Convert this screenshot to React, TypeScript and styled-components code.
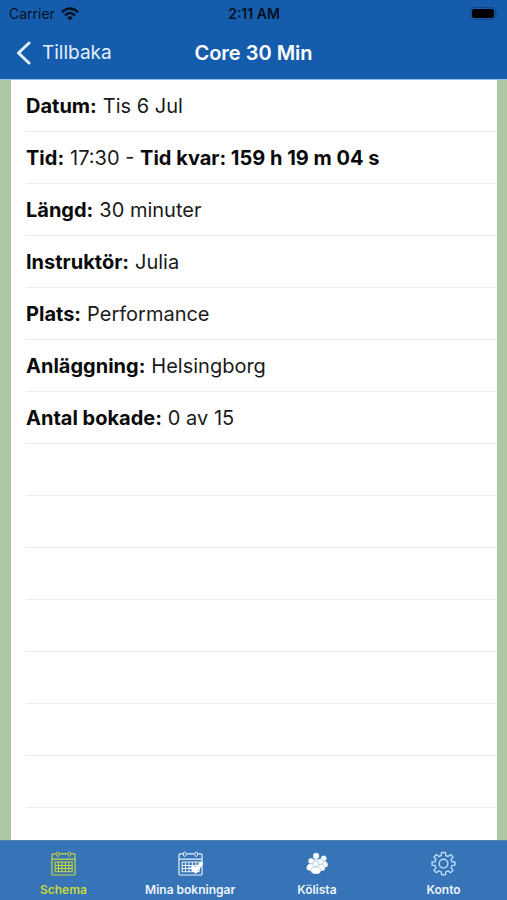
import React from 'react';
import styled, { createGlobalStyle } from 'styled-components';

const GlobalStyle = createGlobalStyle`
  *, *::before, *::after { box-sizing: border-box; }
  body {
    margin: 0;
    font-family: Inter, "Liberation Sans", sans-serif;
    color: #0a0a0a;
    background: #afc8a3;
  }
`;

const Screen = styled.div`
  display: flex;
  flex-direction: column;
  min-height: 100vh;
`;

const Header = styled.header`
  background: #155dac;
  border-bottom: 1px solid #8fc0e6;
`;

const StatusBar = styled.div`
  display: grid;
  grid-template-columns: 1fr auto 1fr;
  align-items: center;
  height: 27px;
  padding: 0 8px 0 9px;
  font-size: 14px;
  line-height: 16px;
  color: #06101f;
`;

const Carrier = styled.span`
  display: flex;
  align-items: center;
  gap: 6px;
`;

const Clock = styled.span`
  font-weight: 600;
`;

const Battery = styled.svg`
  justify-self: end;
`;

const TitleBar = styled.div`
  display: grid;
  grid-template-columns: 1fr auto 1fr;
  align-items: center;
  height: 52px;
  padding: 0 16px;
  color: #fff;
`;

const BackButton = styled.button`
  display: flex;
  align-items: center;
  justify-self: start;
  gap: 11px;
  padding: 0;
  border: 0;
  background: none;
  color: #e4effa;
  font: inherit;
  font-size: 19px;
  line-height: 24px;
  cursor: pointer;
`;

const Title = styled.h1`
  margin: 0;
  font-size: 20px;
  font-weight: 600;
  line-height: 24px;
`;

const Content = styled.main`
  flex: 1;
  margin: 0 10px 0 11px;
  background: #fff;
`;

const Details = styled.dl`
  margin: 0;
  padding-left: 15px;
`;

const Row = styled.div`
  display: flex;
  align-items: center;
  gap: 6px;
  height: 52px;
  border-bottom: 1px solid #ececed;
  font-size: 20px;
  line-height: 24px;
`;

const Label = styled.dt`
  font-weight: 700;
`;

const Value = styled.dd`
  margin: 0;
  color: #1a1a1a;
`;

const Countdown = styled.strong`
  font-weight: 700;
  color: #0a0a0a;
`;

const TabBar = styled.nav`
  display: grid;
  grid-template-columns: repeat(4, 1fr);
  height: 60px;
  border-top: 1px solid #547fae;
  background: #3673b7;
`;

const Tab = styled.a<{ $active?: boolean }>`
  display: flex;
  flex-direction: column;
  align-items: center;
  gap: 6px;
  padding-top: 10px;
  color: ${({ $active }) => ($active ? '#c9d83c' : '#edf4fc')};
  font-size: 12px;
  font-weight: 600;
  line-height: 16px;
  text-decoration: none;
`;

const TabIcon = styled.svg`
  display: block;
  width: 25px;
  height: 25px;
`;

const CalendarShape = () => (
  <g fill="none" stroke="currentColor">
    <path strokeWidth="1.200" d="M5 3H2.200A1.200 1.200 0 0 0 1 4.200V23.800A1.200 1.200 0 0 0 2.200 25H23.800A1.200 1.200 0 0 0 25 23.800V4.200A1.200 1.200 0 0 0 23.800 3H21M9 3H17M1 8.500H25" />
    <ellipse cx="7" cy="3.300" rx="1.500" ry="2.300" />
    <ellipse cx="19" cy="3.300" rx="1.500" ry="2.300" />
    <path strokeWidth="1.100" d="M4.300 11.500H22V21.500H4.300ZM4.300 15H22M4.300 18.200H22M7.800 11.500V21.500M11.400 11.500V21.500M15 11.500V21.500M18.600 11.500V21.500" />
  </g>
);

const ScheduleIcon = () => (
  <TabIcon viewBox="0 0 26 26" aria-hidden="true"><CalendarShape /></TabIcon>
);

const BookingsIcon = () => (
  <TabIcon viewBox="0 0 26 26" aria-hidden="true">
    <CalendarShape />
    <path d="M13 18L15.700 15.500L18.400 18L24 11.500L25.500 13.200L18.700 22.800Z" fill="#fff" stroke="#fff" strokeWidth="1.400" strokeLinejoin="round" />
  </TabIcon>
);

const QueueIcon = () => (
  <TabIcon viewBox="0 0 26 26" aria-hidden="true">
    <g fill="#fff" stroke="#3673b7" strokeWidth="0.300">
      <circle cx="12.600" cy="5.200" r="3.300" />
      <path d="M8.500 15V11.500C8.500 9.300 10.200 8.300 12.600 8.300S16.700 9.300 16.700 11.500V15Z" />
      <circle cx="20.500" cy="7.700" r="3" />
      <path d="M16.800 17V13.500C16.800 11.500 18.300 10.500 20.500 10.500S25 12 25 14.500C25 16.500 22.500 17.500 19.500 17.500Z" />
      <circle cx="7.400" cy="10.400" r="3" />
      <path d="M2.500 18C2.500 15 4.500 13.100 7.500 13.100S11.700 15 11.700 18V20.500C7.500 21.500 2.500 20.500 2.500 18Z" />
      <circle cx="17" cy="11" r="3" />
      <path d="M13.500 18C13.500 15.300 14.500 13.800 17 13.800S22 15.500 22 18.500C22 20.500 18 21.500 15 20.500Z" />
      <circle cx="12.300" cy="13.700" r="3.200" />
      <path d="M7 20.200C7 18 9 16.600 12.300 16.600S17.600 18 17.600 20.500C17.600 22.800 15 24 12.300 24S7 22.600 7 20.200Z" />
    </g>
  </TabIcon>
);

const AccountIcon = () => (
  <TabIcon viewBox="0 0 26 26" fill="none" stroke="#b8d8f4" strokeWidth="1.500" strokeLinejoin="round" aria-hidden="true">
    <path d="M11 1.500H15L15.400 4.700L17.800 5.700L20.400 3.700L22.900 6.200L20.900 8.800L21.900 11.100L24.900 11.500V14.700L21.900 15.100L20.900 17.500L22.900 20.100L20.300 22.600L17.800 20.700L15.400 21.700L15 24.700H11L10.600 21.700L8.200 20.700L5.700 22.600L3.100 20.100L5.100 17.500L4.100 15.100L1.100 14.700V11.500L4.100 11.100L5.100 8.800L3.100 6.200L5.600 3.700L8.200 5.700L10.600 4.700Z" />
    <circle cx="13" cy="13.100" r="4.500" />
  </TabIcon>
);

const details: { label: string; value: React.ReactNode }[] = [
  { label: 'Datum:', value: 'Tis 6 Jul' },
  { label: 'Tid:', value: <>17:30 - <Countdown>Tid kvar: 159 h 19 m 04 s</Countdown></> },
  { label: 'Längd:', value: '30 minuter' },
  { label: 'Instruktör:', value: 'Julia' },
  { label: 'Plats:', value: 'Performance' },
  { label: 'Anläggning:', value: 'Helsingborg' },
  { label: 'Antal bokade:', value: '0 av 15' },
];

const emptyRows = Array.from({ length: 7 }, (_, i) => i);

const tabs = [
  { id: 'schema', label: 'Schema', Icon: ScheduleIcon, active: true },
  { id: 'bokningar', label: 'Mina bokningar', Icon: BookingsIcon },
  { id: 'kolista', label: 'Kölista', Icon: QueueIcon },
  { id: 'konto', label: 'Konto', Icon: AccountIcon },
];

export default function App() {
  return (
    <>
      <GlobalStyle />
      <Screen>
        <Header>
          <StatusBar>
            <Carrier>
              Carrier
              <svg width="18" height="14" viewBox="0 0 18 14" aria-hidden="true">
                <g fill="none" stroke="currentColor" strokeWidth="2.400">
                  <path d="M1 5.200Q9 -2.200 17 5.200" />
                  <path d="M4 8.400Q9 3.800 14 8.400" />
                </g>
                <path d="M6.200 10.500Q9 8.200 11.800 10.500L9 13.500Z" fill="currentColor" />
              </svg>
            </Carrier>
            <Clock>2:11 AM</Clock>
            <Battery width="29" height="14" viewBox="0 0 29 14" aria-hidden="true">
              <rect x="0.500" y="0.500" width="25" height="12" rx="3.500" fill="none" stroke="#0f4683" />
              <rect x="2" y="2" width="22" height="9" rx="2" fill="#000" />
              <path d="M27 4.500Q29 6.500 27 8.500Z" fill="#0f4683" />
            </Battery>
          </StatusBar>
          <TitleBar>
            <BackButton type="button">
              <svg width="15" height="24" viewBox="0 0 15 24" fill="none" stroke="currentColor" strokeWidth="3" strokeLinecap="round" strokeLinejoin="round" aria-hidden="true">
                <path d="M13 2L2.500 12L13 22" />
              </svg>
              Tillbaka
            </BackButton>
            <Title>Core 30 Min</Title>
          </TitleBar>
        </Header>
        <Content>
          <Details>
            {details.map(({ label, value }) => (
              <Row key={label}>
                <Label>{label}</Label>
                <Value>{value}</Value>
              </Row>
            ))}
          </Details>
          <Details as="div" aria-hidden="true">
            {emptyRows.map((i) => <Row key={i} />)}
          </Details>
        </Content>
        <TabBar>
          {tabs.map(({ id, label, Icon, active }) => (
            <Tab key={id} href={`#${id}`} $active={active} aria-current={active ? 'page' : undefined}>
              <Icon />
              {label}
            </Tab>
          ))}
        </TabBar>
      </Screen>
    </>
  );
}
